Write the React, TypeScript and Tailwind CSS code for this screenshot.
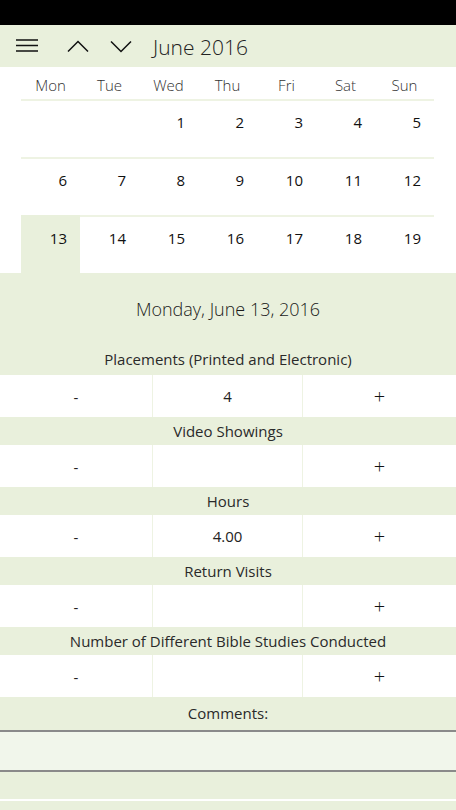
import React from "react";

const DAYS = ["Mon", "Tue", "Wed", "Thu", "Fri", "Sat", "Sun"];

const WEEKS: (number | null)[][] = [
  [null, null, 1, 2, 3, 4, 5],
  [6, 7, 8, 9, 10, 11, 12],
  [13, 14, 15, 16, 17, 18, 19],
];

const SELECTED = 13;

const COUNTERS: { label: string; value: string; first?: boolean }[] = [
  { label: "Placements (Printed and Electronic)", value: "4", first: true },
  { label: "Video Showings", value: "" },
  { label: "Hours", value: "4.00" },
  { label: "Return Visits", value: "" },
  { label: "Number of Different Bible Studies Conducted", value: "" },
];

function Hamburger() {
  return (
    <svg width="22" height="14" viewBox="0 0 22 14" className="text-[#111]">
      <path d="M0 1h22M0 6.5h22M0 12h22" stroke="currentColor" strokeWidth="1.6" fill="none" />
    </svg>
  );
}

function Chevron({ up }: { up?: boolean }) {
  return (
    <svg width="22" height="12" viewBox="0 0 22 12" className="text-[#111]">
      <path
        d={up ? "M1 11.5L11 1.5L21 11.5" : "M1 0.5L11 10.5L21 0.5"}
        stroke="currentColor"
        strokeWidth="1.5"
        fill="none"
      />
    </svg>
  );
}

function CounterRow({ label, value, first }: { label: string; value: string; first?: boolean }) {
  return (
    <div>
      <div
        className={`${first ? "h-[30px] pb-[1px]" : "h-[28px]"} flex items-center justify-center bg-[#e9f0dc] text-[15px] text-[#2a2a2a]`}
      >
        {label}
      </div>
      <div className="h-[42px] grid grid-cols-[152px_151px_1fr] bg-white text-[15px] text-[#222]">
        <div className="flex items-center justify-center pt-[2px]">-</div>
        <div className="flex items-center justify-center border-x border-[#eef3e3]">{value}</div>
        <div className="flex items-center justify-center pt-[1px] text-[20px] leading-none font-light text-[#111]">+</div>
      </div>
    </div>
  );
}

export default function App() {
  return (
    <div className="w-[456px] h-[810px] overflow-hidden bg-white font-['Open_Sans','Noto_Sans',sans-serif]">
      {/* status bar */}
      <div className="h-[25px] bg-black" />

      {/* header */}
      <div className="h-[42px] bg-[#e9f0dc] flex items-center">
        <div className="ml-[16px]">
          <Hamburger />
        </div>
        <div className="ml-[29px]">
          <Chevron up />
        </div>
        <div className="ml-[21px] mt-[1px]">
          <Chevron />
        </div>
        <span className="ml-[21px] text-[21px] font-light text-[#222] leading-none mt-[2px]">June 2016</span>
      </div>

      {/* calendar */}
      <div className="px-[21px] w-[455px]">
        <div className="h-[32px] grid grid-cols-7 items-center pt-[4px] text-[15px] font-light text-[#333]">
          {DAYS.map((d) => (
            <div key={d} className="text-center">
              {d}
            </div>
          ))}
        </div>
        {WEEKS.map((week, i) => (
          <div key={i} className="h-[58px] grid grid-cols-7 border-t-2 border-[#eef3e3]">
            {week.map((n, j) => (
              <div
                key={j}
                className={`pr-[13px] text-right text-[15px] text-[#111] ${n === SELECTED ? "bg-[#e9f0dc] -mt-[2px] pt-[12px]" : "pt-[10px]"}`}
              >
                {n ?? ""}
              </div>
            ))}
          </div>
        ))}
      </div>

      {/* selected day */}
      <div className="h-[72px] bg-[#e9f0dc] flex items-center justify-center text-[18px] font-light text-[#1a1a1a]">
        Monday, June 13, 2016
      </div>

      {COUNTERS.map((c) => (
        <CounterRow key={c.label} {...c} />
      ))}

      {/* comments */}
      <div className="h-[33px] bg-[#e9f0dc] flex items-center justify-center text-[15px] text-[#2a2a2a]">
        Comments:
      </div>
      <div className="h-[42px] bg-[#f1f6eb] border-y-2 border-[#8a8a8a]" />
      <div className="h-[27px] bg-[#e9f0dc]" />
      <div className="h-[2px] bg-white" />
      <div className="h-[10px] bg-[#e9f0dc]" />
    </div>
  );
}
